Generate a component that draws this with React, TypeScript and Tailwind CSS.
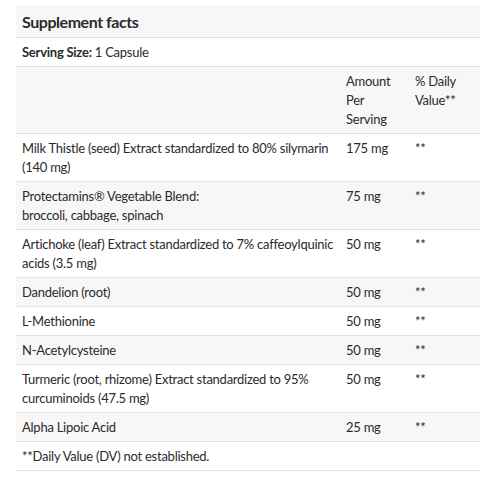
import React from "react"

const rows = [
    { name: "Milk Thistle (seed) Extract standardized to 80% silymarin (140 mg)", amount: "175 mg" },
    { name: "Protectamins® Vegetable Blend:\nbroccoli, cabbage, spinach", amount: "75 mg" },
    { name: "Artichoke (leaf) Extract standardized to 7% caffeoylquinic acids (3.5 mg)", amount: "50 mg" },
    { name: "Dandelion (root)", amount: "50 mg" },
    { name: "L-Methionine", amount: "50 mg" },
    { name: "N-Acetylcysteine", amount: "50 mg" },
    { name: "Turmeric (root, rhizome) Extract standardized to 95% curcuminoids (47.5 mg)", amount: "50 mg" },
    { name: "Alpha Lipoic Acid", amount: "25 mg" },
]

const cell = "pl-[6px] pr-[6px] pt-[5px] pb-[4px] align-top"

export default function App() {
    return (
        <div className="w-[493px] h-[488px] bg-white pt-[5px] pl-4 pr-[13px] text-[#2b2b2b] text-[13px] leading-[19px] tracking-[-0.25px]" style={{ fontFamily: "Lato, 'Liberation Sans', sans-serif" }}>
            <table className="w-full table-fixed border-collapse">
                <colgroup>
                    <col className="w-[324px]" />
                    <col className="w-[69px]" />
                    <col />
                </colgroup>
                <tbody>
                <tr className="bg-[#f7f7f7] border-b border-[#e3e3e3]">
                    <td colSpan={3} className="pl-[6px] pt-[7px] pb-[6px] text-[16px] leading-[19px] font-bold tracking-[-0.45px]">Supplement facts</td>
                </tr>
                <tr className="border-b border-[#e3e3e3]">
                    <td colSpan={3} className={cell}><span className="font-bold">Serving Size:</span> 1 Capsule</td>
                </tr>
                <tr className="bg-[#f7f7f7] border-b border-[#e3e3e3]">
                    <td className={cell}></td>
                    <td className={cell}>Amount Per Serving</td>
                    <td className={cell}>% Daily Value**</td>
                </tr>
                {rows.map((r, i) => (
                    <tr key={i} className={(i % 2 === 1 ? "bg-[#f7f7f7] " : "") + "border-b border-[#e3e3e3]"}>
                        <td className="pl-[6px] pr-0 pt-[5px] pb-[4px] align-top whitespace-pre-line">{r.name}</td>
                        <td className={cell}>{r.amount}</td>
                        <td className={cell}>**</td>
                    </tr>
                ))}
                <tr className="border-b border-[#e3e3e3]">
                    <td colSpan={3} className={cell}>**Daily Value (DV) not established.</td>
                </tr>
                </tbody>
            </table>
        </div>
    )
}
